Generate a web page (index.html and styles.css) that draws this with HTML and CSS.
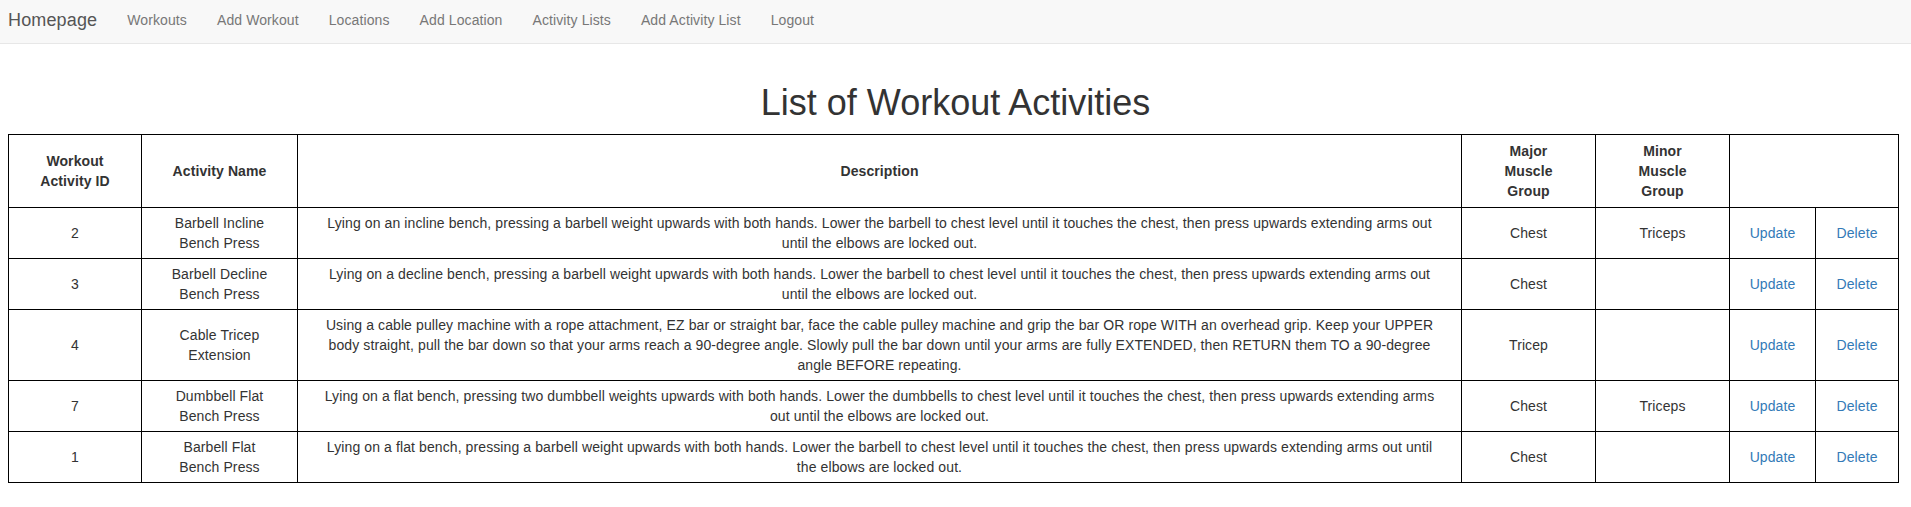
FILE: index.html
```html
<!DOCTYPE html>
<html lang="en">
<head>
<meta charset="utf-8">
<title>List of Workout Activities</title>
<link rel="stylesheet" href="styles.css">
</head>
<body>
<nav class="navbar">
  <a class="brand" href="#">Homepage</a>
  <ul class="nav-links">
    <li><a href="#">Workouts</a></li>
    <li><a href="#">Add Workout</a></li>
    <li><a href="#">Locations</a></li>
    <li><a href="#">Add Location</a></li>
    <li><a href="#">Activity Lists</a></li>
    <li><a href="#">Add Activity List</a></li>
    <li><a href="#">Logout</a></li>
  </ul>
</nav>
<main class="main">
  <h1 class="title">List of Workout Activities</h1>
  <table class="activities">
    <colgroup>
      <col class="c-id"><col class="c-name"><col class="c-desc"><col class="c-major"><col class="c-minor"><col class="c-upd"><col class="c-del">
    </colgroup>
    <thead>
      <tr>
        <th>Workout Activity ID</th>
        <th>Activity Name</th>
        <th>Description</th>
        <th>Major Muscle Group</th>
        <th>Minor Muscle Group</th>
        <th colspan="2"></th>
      </tr>
    </thead>
    <tbody>
      <tr>
        <td>2</td>
        <td>Barbell Incline<br>Bench Press</td>
        <td class="desc">Lying on an incline bench, pressing a barbell weight upwards with both hands. Lower the barbell to chest level until it touches the chest, then press upwards extending arms out<br>until the elbows are locked out.</td>
        <td>Chest</td>
        <td>Triceps</td>
        <td class="action"><a href="#">Update</a></td>
        <td class="action"><a href="#">Delete</a></td>
      </tr>
      <tr>
        <td>3</td>
        <td>Barbell Decline<br>Bench Press</td>
        <td class="desc">Lying on a decline bench, pressing a barbell weight upwards with both hands. Lower the barbell to chest level until it touches the chest, then press upwards extending arms out<br>until the elbows are locked out.</td>
        <td>Chest</td>
        <td></td>
        <td class="action"><a href="#">Update</a></td>
        <td class="action"><a href="#">Delete</a></td>
      </tr>
      <tr>
        <td>4</td>
        <td>Cable Tricep<br>Extension</td>
        <td class="desc">Using a cable pulley machine with a rope attachment, EZ bar or straight bar, face the cable pulley machine and grip the bar OR rope WITH an overhead grip. Keep your UPPER<br>body straight, pull the bar down so that your arms reach a 90-degree angle. Slowly pull the bar down until your arms are fully EXTENDED, then RETURN them TO a 90-degree<br>angle BEFORE repeating.</td>
        <td>Tricep</td>
        <td></td>
        <td class="action"><a href="#">Update</a></td>
        <td class="action"><a href="#">Delete</a></td>
      </tr>
      <tr>
        <td>7</td>
        <td>Dumbbell Flat<br>Bench Press</td>
        <td class="desc">Lying on a flat bench, pressing two dumbbell weights upwards with both hands. Lower the dumbbells to chest level until it touches the chest, then press upwards extending arms<br>out until the elbows are locked out.</td>
        <td>Chest</td>
        <td>Triceps</td>
        <td class="action"><a href="#">Update</a></td>
        <td class="action"><a href="#">Delete</a></td>
      </tr>
      <tr>
        <td>1</td>
        <td>Barbell Flat<br>Bench Press</td>
        <td class="desc">Lying on a flat bench, pressing a barbell weight upwards with both hands. Lower the barbell to chest level until it touches the chest, then press upwards extending arms out until<br>the elbows are locked out.</td>
        <td>Chest</td>
        <td></td>
        <td class="action"><a href="#">Update</a></td>
        <td class="action"><a href="#">Delete</a></td>
      </tr>
    </tbody>
  </table>
</main>
</body>
</html>
```

FILE: styles.css
```css
html, body {
  margin: 0;
  padding: 0;
  background: #fff;
}
body {
  font-family: "Liberation Sans", Arial, Helvetica, sans-serif;
  font-size: 14px;
  line-height: 20px;
  color: #333;
  letter-spacing: 0.1px;
}
a {
  text-decoration: none;
}
.navbar {
  display: flex;
  align-items: center;
  box-sizing: content-box;
  height: 40px;
  padding: 0 0 3px 8px;
  background: #f8f8f8;
  border-bottom: 1px solid #e7e7e7;
}
.brand {
  font-size: 18px;
  line-height: 20px;
  color: #555;
  padding-right: 15px;
  letter-spacing: 0.15px;
}
.nav-links {
  display: flex;
  list-style: none;
  margin: 0;
  padding: 0;
}
.nav-links a {
  display: block;
  padding: 0 15px;
  color: #777;
  line-height: 20px;
}
.main {
  padding: 39px 0 0 8px;
}
.title {
  margin: 0 0 11px;
  padding-right: 8px;
  font-size: 36px;
  font-weight: 500;
  line-height: 39.6px;
  letter-spacing: 0;
  text-align: center;
  color: #333;
}
.activities {
  table-layout: fixed;
  border-collapse: collapse;
  width: 1890px;
}
.c-id { width: 133px; }
.c-name { width: 156px; }
.c-desc { width: 1164px; }
.c-major { width: 134px; }
.c-minor { width: 134px; }
.c-upd { width: 86px; }
.c-del { width: 83px; }
.activities th,
.activities td {
  border: 1px solid #000;
  padding: 5px 25px;
  text-align: center;
  vertical-align: middle;
  line-height: 20px;
}
.activities th {
  font-weight: bold;
  padding-top: 6px;
  padding-bottom: 6px;
}
.activities td.desc {
  padding: 5px 10px;
}
.activities td.action {
  padding: 5px;
}
.activities td.action a {
  color: #337ab7;
}
```
